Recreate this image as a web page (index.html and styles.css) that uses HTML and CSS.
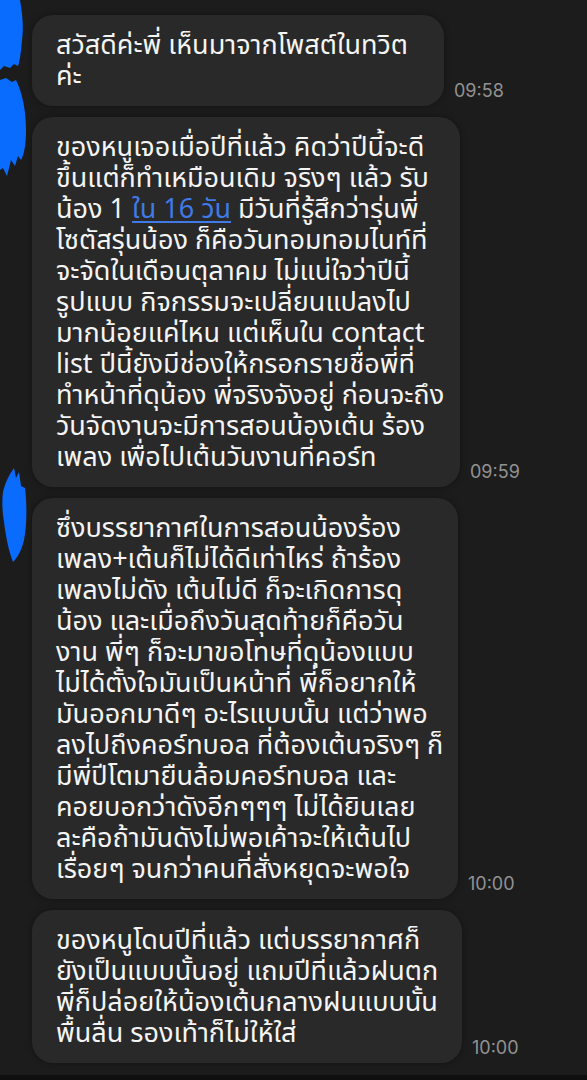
FILE: index.html
```html
<!DOCTYPE html>
<html lang="th">
<head>
<meta charset="utf-8">
<title>Chat</title>
<link rel="stylesheet" href="styles.css">
</head>
<body>
<div class="chat">
  <svg class="redact" width="30" height="580" viewBox="0 0 30 580" aria-hidden="true">
    <path fill="#0a6cff" d="M0 0 H20 C22 12 24 26 22 40 C21 52 20 60 18 66 L14 64 L10 68 L4 66 L0 70 Z"/>
    <path fill="#0a6cff" d="M0 80 L6 78 L12 82 L16 80 C22 92 26 110 26 130 C26 145 24 155 21 160 L18 156 L15 166 L11 160 L7 176 L3 168 L0 170 Z"/>
    <path fill="#0a6cff" d="M3 492 C6 480 10 474 14 468 L16 478 L19 472 L21 486 L25 488 C27 505 27 525 24 540 C21 552 17 558 13 562 C9 552 6 538 4 522 C2 510 2 500 3 492 Z"/>
  </svg>

  <div class="row">
    <div class="bubble w1">สวัสดีค่ะพี่ เห็นมาจากโพสต์ในทวิต<br>ค่ะ</div>
    <span class="time">09:58</span>
  </div>

  <div class="row">
    <div class="bubble w2">ของหนูเจอเมื่อปีที่แล้ว คิดว่าปีนี้จะดี<br>ขึ้นแต่ก็ทำเหมือนเดิม จริงๆ แล้ว รับ<br>น้อง 1 <a class="link" href="#">ใน 16 วัน</a> มีวันที่รู้สึกว่ารุ่นพี่<br>โซตัสรุ่นน้อง ก็คือวันทอมทอมไนท์ที่<br>จะจัดในเดือนตุลาคม ไม่แน่ใจว่าปีนี้<br>รูปแบบ กิจกรรมจะเปลี่ยนแปลงไป<br>มากน้อยแค่ไหน แต่เห็นใน contact<br>list ปีนี้ยังมีช่องให้กรอกรายชื่อพี่ที่<br>ทำหน้าที่ดุน้อง พี่จริงจังอยู่ ก่อนจะถึง<br>วันจัดงานจะมีการสอนน้องเต้น ร้อง<br>เพลง เพื่อไปเต้นวันงานที่คอร์ท</div>
    <span class="time">09:59</span>
  </div>

  <div class="row">
    <div class="bubble w3">ซึ่งบรรยากาศในการสอนน้องร้อง<br>เพลง+เต้นก็ไม่ได้ดีเท่าไหร่ ถ้าร้อง<br>เพลงไม่ดัง เต้นไม่ดี ก็จะเกิดการดุ<br>น้อง และเมื่อถึงวันสุดท้ายก็คือวัน<br>งาน พี่ๆ ก็จะมาขอโทษที่ดุน้องแบบ<br>ไม่ได้ตั้งใจมันเป็นหน้าที่ พี่ก็อยากให้<br>มันออกมาดีๆ อะไรแบบนั้น แต่ว่าพอ<br>ลงไปถึงคอร์ทบอล ที่ต้องเต้นจริงๆ ก็<br>มีพี่ปีโตมายืนล้อมคอร์ทบอล และ<br>คอยบอกว่าดังอีกๆๆๆ ไม่ได้ยินเลย<br>ละคือถ้ามันดังไม่พอเค้าจะให้เต้นไป<br>เรื่อยๆ จนกว่าคนที่สั่งหยุดจะพอใจ</div>
    <span class="time">10:00</span>
  </div>

  <div class="row">
    <div class="bubble w4">ของหนูโดนปีที่แล้ว แต่บรรยากาศก็<br>ยังเป็นแบบนั้นอยู่ แถมปีที่แล้วฝนตก<br>พี่ก็ปล่อยให้น้องเต้นกลางฝนแบบนั้น<br>พื้นลื่น รองเท้าก็ไม่ให้ใส่</div>
    <span class="time">10:00</span>
  </div>
</div>
<div class="bottom-bar"></div>
</body>
</html>
```

FILE: styles.css
```css
html, body {
  margin: 0;
  padding: 0;
  background: #1c1c1c;
  height: 1080px;
  overflow: hidden;
}

.chat {
  position: relative;
  padding: 15px 0 0 32px;
  display: flex;
  flex-direction: column;
  gap: 11px;
  height: 1060px;
  box-sizing: border-box;
}

.redact {
  position: absolute;
  left: 0;
  top: 0;
}

.row {
  display: flex;
  align-items: flex-end;
  gap: 10px;
}

.bubble {
  box-sizing: border-box;
  background: #292929;
  border-radius: 21px;
  padding: 15px 0 14px 24px;
  color: #f4f4f4;
  font-family: "Noto Sans Thai", "Noto Sans", "Inter", sans-serif;
  font-size: 27px;
  line-height: 31px;
  white-space: nowrap;
  box-shadow: 0 0 6px rgba(0, 0, 0, 0.35);
}

.w1 { width: 412px; }
.w2 { width: 428px; }
.w3 { width: 426px; }
.w4 { width: 430px; }

.link {
  color: #3f7ae6;
  text-decoration: underline;
  text-decoration-thickness: 2px;
  text-underline-offset: 3px;
}

.time {
  font-family: "Inter", "Liberation Sans", sans-serif;
  font-size: 18px;
  line-height: 20px;
  color: #929292;
  margin-bottom: 5px;
}

.bottom-bar {
  height: 20px;
  background: #0f0f0f;
  margin-top: 15px;
}
```
